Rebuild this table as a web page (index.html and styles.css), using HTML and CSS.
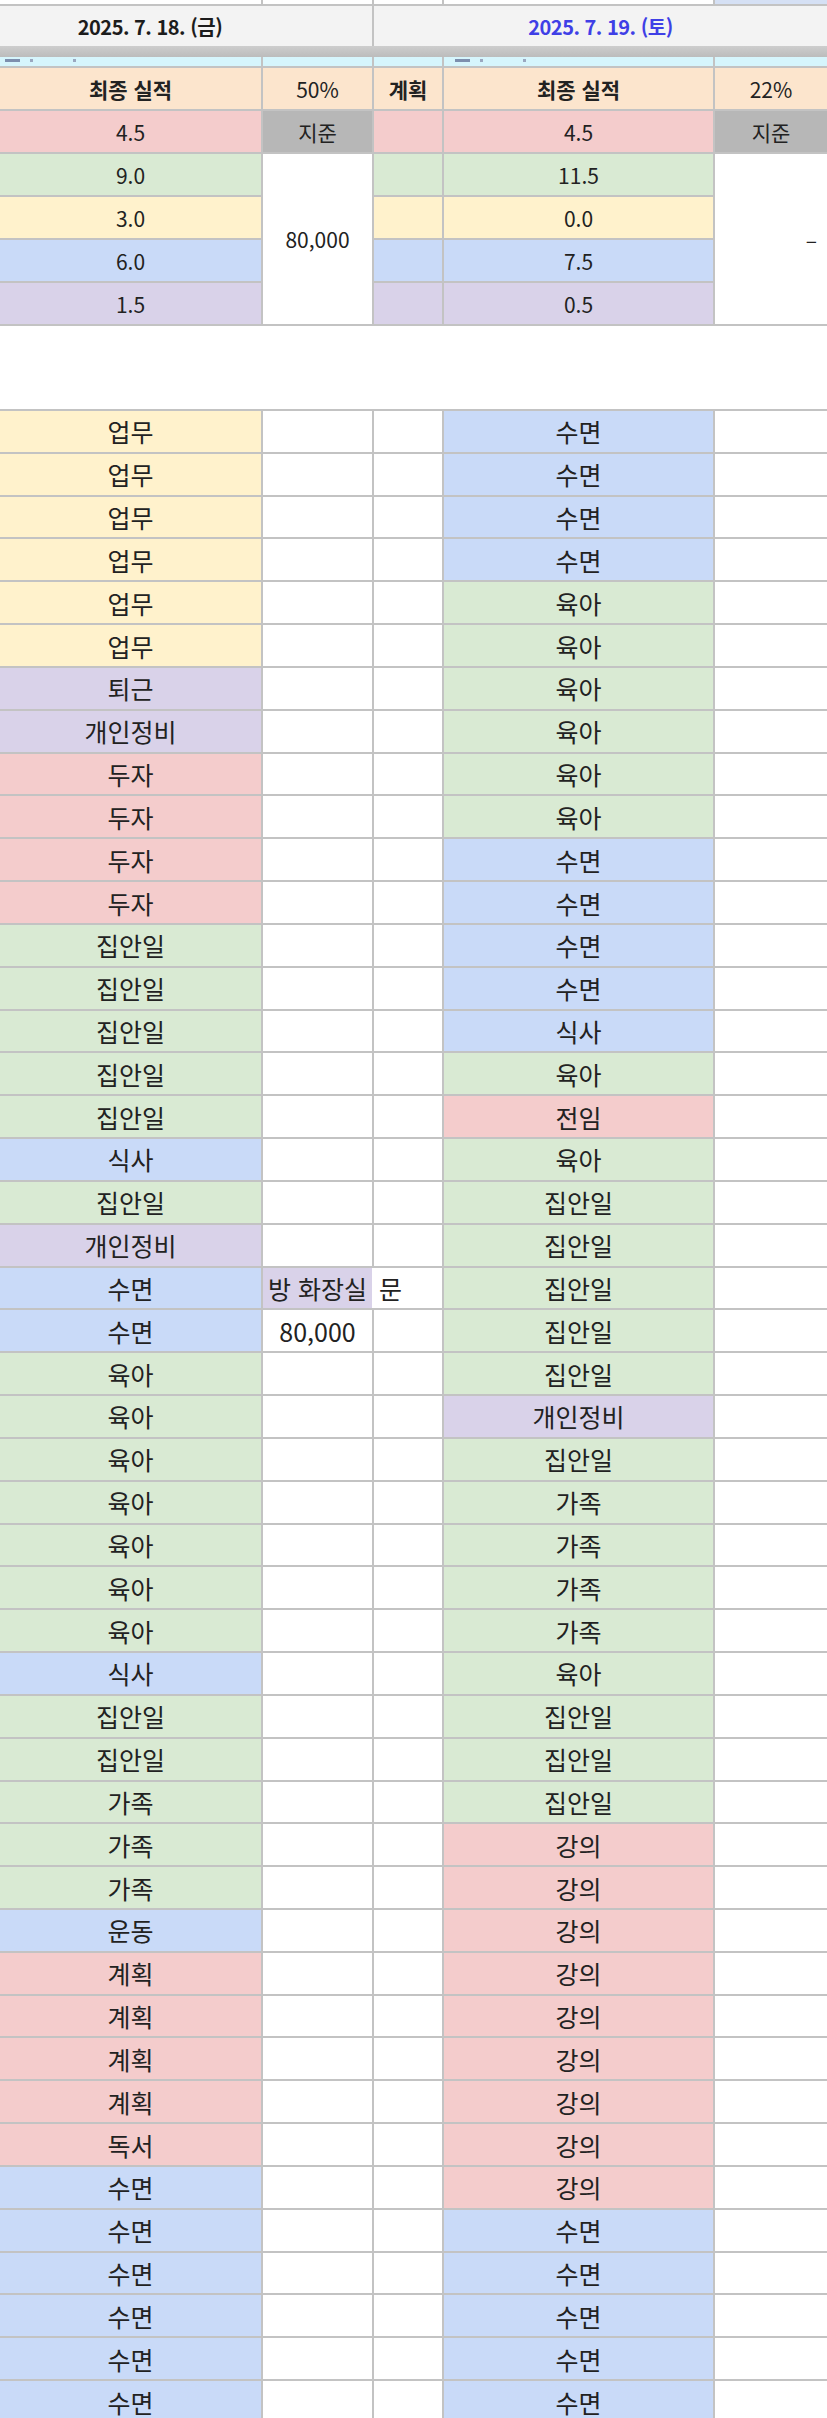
FILE: index.html
```html
<!DOCTYPE html>
<html lang="ko">

<head>
  <meta charset="UTF-8">
  <meta name="viewport" content="width=device-width, initial-scale=1.0">
  <title>시간 기록</title>
  <link rel="stylesheet" href="styles.css">
</head>

<body>
  <div class="sheet">
    <div class="topline">
      <div class="cell"></div><div class="cell"></div><div class="cell"></div><div class="cell"></div><div class="cell sky"></div>
    </div>

    <div class="dates">
      <div class="date fri">2025. 7. 18. (금)</div>
      <div class="date sat">2025. 7. 19. (토)</div>
    </div>
    <div class="freeze"></div>

    <div class="band">
      <div class="cell"><span class="dash"></span><span class="dot"></span><span class="dot far"></span></div>
      <div class="cell"></div>
      <div class="cell"></div>
      <div class="cell marks-r"><span class="dash"></span><span class="dot"></span><span class="dot far"></span></div>
      <div class="cell"></div>
    </div>

    <!-- 요약 -->
    <div class="summary">
      <div class="cell peach bold">최종 실적</div>
      <div class="cell peach">50%</div>
      <div class="cell peach bold">계획</div>
      <div class="cell peach bold">최종 실적</div>
      <div class="cell peach">22%</div>

      <div class="cell r">4.5</div>
      <div class="cell grey">지준</div>
      <div class="cell r"></div>
      <div class="cell r">4.5</div>
      <div class="cell grey">지준</div>

      <div class="cell g">9.0</div>
      <div class="cell merged plan">80,000</div>
      <div class="cell g"></div>
      <div class="cell g">11.5</div>
      <div class="cell merged rest">–</div>

      <div class="cell y">3.0</div>
      <div class="cell y"></div>
      <div class="cell y">0.0</div>

      <div class="cell b">6.0</div>
      <div class="cell b"></div>
      <div class="cell b">7.5</div>

      <div class="cell p">1.5</div>
      <div class="cell p"></div>
      <div class="cell p">0.5</div>
    </div>

    <!-- 시간대별 기록 -->
    <div class="log">
      <div class="cell y">업무</div><div class="cell"></div><div class="cell"></div><div class="cell b">수면</div><div class="cell"></div>
      <div class="cell y">업무</div><div class="cell"></div><div class="cell"></div><div class="cell b">수면</div><div class="cell"></div>
      <div class="cell y">업무</div><div class="cell"></div><div class="cell"></div><div class="cell b">수면</div><div class="cell"></div>
      <div class="cell y">업무</div><div class="cell"></div><div class="cell"></div><div class="cell b">수면</div><div class="cell"></div>
      <div class="cell y">업무</div><div class="cell"></div><div class="cell"></div><div class="cell g">육아</div><div class="cell"></div>
      <div class="cell y">업무</div><div class="cell"></div><div class="cell"></div><div class="cell g">육아</div><div class="cell"></div>
      <div class="cell p">퇴근</div><div class="cell"></div><div class="cell"></div><div class="cell g">육아</div><div class="cell"></div>
      <div class="cell p">개인정비</div><div class="cell"></div><div class="cell"></div><div class="cell g">육아</div><div class="cell"></div>
      <div class="cell r">두자</div><div class="cell"></div><div class="cell"></div><div class="cell g">육아</div><div class="cell"></div>
      <div class="cell r">두자</div><div class="cell"></div><div class="cell"></div><div class="cell g">육아</div><div class="cell"></div>
      <div class="cell r">두자</div><div class="cell"></div><div class="cell"></div><div class="cell b">수면</div><div class="cell"></div>
      <div class="cell r">두자</div><div class="cell"></div><div class="cell"></div><div class="cell b">수면</div><div class="cell"></div>
      <div class="cell g">집안일</div><div class="cell"></div><div class="cell"></div><div class="cell b">수면</div><div class="cell"></div>
      <div class="cell g">집안일</div><div class="cell"></div><div class="cell"></div><div class="cell b">수면</div><div class="cell"></div>
      <div class="cell g">집안일</div><div class="cell"></div><div class="cell"></div><div class="cell b">식사</div><div class="cell"></div>
      <div class="cell g">집안일</div><div class="cell"></div><div class="cell"></div><div class="cell g">육아</div><div class="cell"></div>
      <div class="cell g">집안일</div><div class="cell"></div><div class="cell"></div><div class="cell r">전임</div><div class="cell"></div>
      <div class="cell b">식사</div><div class="cell"></div><div class="cell"></div><div class="cell g">육아</div><div class="cell"></div>
      <div class="cell g">집안일</div><div class="cell"></div><div class="cell"></div><div class="cell g">집안일</div><div class="cell"></div>
      <div class="cell p">개인정비</div><div class="cell"></div><div class="cell"></div><div class="cell g">집안일</div><div class="cell"></div>
      <div class="cell b">수면</div><div class="cell p clip">방 화장실</div><div class="cell spill">문</div><div class="cell g">집안일</div><div class="cell"></div>
      <div class="cell b">수면</div><div class="cell">80,000</div><div class="cell"></div><div class="cell g">집안일</div><div class="cell"></div>
      <div class="cell g">육아</div><div class="cell"></div><div class="cell"></div><div class="cell g">집안일</div><div class="cell"></div>
      <div class="cell g">육아</div><div class="cell"></div><div class="cell"></div><div class="cell p">개인정비</div><div class="cell"></div>
      <div class="cell g">육아</div><div class="cell"></div><div class="cell"></div><div class="cell g">집안일</div><div class="cell"></div>
      <div class="cell g">육아</div><div class="cell"></div><div class="cell"></div><div class="cell g">가족</div><div class="cell"></div>
      <div class="cell g">육아</div><div class="cell"></div><div class="cell"></div><div class="cell g">가족</div><div class="cell"></div>
      <div class="cell g">육아</div><div class="cell"></div><div class="cell"></div><div class="cell g">가족</div><div class="cell"></div>
      <div class="cell g">육아</div><div class="cell"></div><div class="cell"></div><div class="cell g">가족</div><div class="cell"></div>
      <div class="cell b">식사</div><div class="cell"></div><div class="cell"></div><div class="cell g">육아</div><div class="cell"></div>
      <div class="cell g">집안일</div><div class="cell"></div><div class="cell"></div><div class="cell g">집안일</div><div class="cell"></div>
      <div class="cell g">집안일</div><div class="cell"></div><div class="cell"></div><div class="cell g">집안일</div><div class="cell"></div>
      <div class="cell g">가족</div><div class="cell"></div><div class="cell"></div><div class="cell g">집안일</div><div class="cell"></div>
      <div class="cell g">가족</div><div class="cell"></div><div class="cell"></div><div class="cell r">강의</div><div class="cell"></div>
      <div class="cell g">가족</div><div class="cell"></div><div class="cell"></div><div class="cell r">강의</div><div class="cell"></div>
      <div class="cell b">운동</div><div class="cell"></div><div class="cell"></div><div class="cell r">강의</div><div class="cell"></div>
      <div class="cell r">계획</div><div class="cell"></div><div class="cell"></div><div class="cell r">강의</div><div class="cell"></div>
      <div class="cell r">계획</div><div class="cell"></div><div class="cell"></div><div class="cell r">강의</div><div class="cell"></div>
      <div class="cell r">계획</div><div class="cell"></div><div class="cell"></div><div class="cell r">강의</div><div class="cell"></div>
      <div class="cell r">계획</div><div class="cell"></div><div class="cell"></div><div class="cell r">강의</div><div class="cell"></div>
      <div class="cell r">독서</div><div class="cell"></div><div class="cell"></div><div class="cell r">강의</div><div class="cell"></div>
      <div class="cell b">수면</div><div class="cell"></div><div class="cell"></div><div class="cell r">강의</div><div class="cell"></div>
      <div class="cell b">수면</div><div class="cell"></div><div class="cell"></div><div class="cell b">수면</div><div class="cell"></div>
      <div class="cell b">수면</div><div class="cell"></div><div class="cell"></div><div class="cell b">수면</div><div class="cell"></div>
      <div class="cell b">수면</div><div class="cell"></div><div class="cell"></div><div class="cell b">수면</div><div class="cell"></div>
      <div class="cell b">수면</div><div class="cell"></div><div class="cell"></div><div class="cell b">수면</div><div class="cell"></div>
      <div class="cell b">수면</div><div class="cell"></div><div class="cell"></div><div class="cell b">수면</div><div class="cell"></div>
    </div>
  </div>
</body>

</html>
```

FILE: styles.css
```css
:root {
  --line: #c3c3c3;
  --peach: #fce5cd;
  --red: #f4cccc;
  --green: #d9ead3;
  --yellow: #fff2cc;
  --blue: #c9daf8;
  --purple: #d9d2e9;
  --grey: #b7b7b7;
  --cols: 261px 109px 68px 269px 112px;
}

html,
body {
  margin: 0;
  height: 2418px;
  overflow: hidden;
  background: #fff;
  font-family: "Noto Sans CJK KR", "Noto Sans", sans-serif;
  color: #222;
}

.sheet {
  width: 827px;
}

.cell {
  background: #fff;
  display: flex;
  align-items: center;
  justify-content: center;
  white-space: nowrap;
  overflow: hidden;
}

/* fill colours */
.peach { background: var(--peach); }
.r { background: var(--red); }
.g { background: var(--green); }
.y { background: var(--yellow); }
.b { background: var(--blue); }
.p { background: var(--purple); }
.grey { background: var(--grey); }
.sky { background: #d5e0f4; }

.bold {
  font-weight: 700;
}

/* partial row cut at the top */
.topline {
  display: grid;
  grid-template-columns: var(--cols);
  column-gap: 2px;
  height: 4px;
  padding-bottom: 2px;
  background: var(--line);
}

.dates {
  display: grid;
  grid-template-columns: 372px 453px;
  column-gap: 2px;
  height: 40px;
  background: var(--line);
}

.date {
  background: #f3f3f3;
  display: flex;
  align-items: center;
  justify-content: center;
  font-size: 20px;
  font-weight: 700;
  letter-spacing: -0.5px;

  &.fri {
    padding-right: 72px;
    color: #1c1c1c;
  }

  &.sat {
    color: #3f3fe6;
  }
}

.freeze {
  height: 11px;
  background: linear-gradient(#cdcdcd, #bcbcbc);
}

.band {
  display: grid;
  grid-template-columns: var(--cols);
  column-gap: 2px;
  height: 9px;
  background: var(--line);

  .cell {
    background: #d6f5fc;
    justify-content: flex-start;
    align-items: flex-start;
    padding-left: 5px;
    gap: 10px;
  }

  .marks-r {
    padding-left: 11px;
  }

  .dash {
    width: 15px;
    height: 3px;
    margin-top: 2px;
    background: #7d8fae;
  }

  .dot {
    width: 3px;
    height: 3px;
    margin-top: 2px;
    background: #9aa8c0;

    &.far {
      margin-left: 30px;
    }
  }
}

.summary {
  display: grid;
  grid-template-columns: var(--cols);
  grid-auto-rows: 41px;
  gap: 2px;
  padding: 2px 0;
  background: var(--line);
  font-size: 21px;

  .merged {
    grid-row: 3 / span 4;
  }

  .plan {
    grid-column: 2;
  }

  .rest {
    grid-column: 5;
    justify-content: flex-end;
    padding-right: 10px;
  }
}

.log {
  margin-top: 83px;
  display: grid;
  grid-template-columns: var(--cols);
  grid-auto-rows: 40.83px;
  gap: 2px;
  padding-top: 2px;
  background: var(--line);
  font-size: 25px;

  .clip {
    justify-content: center;
  }

  .spill {
    margin-left: -2px;
    justify-content: flex-start;
    padding-left: 7px;
  }
}
```
